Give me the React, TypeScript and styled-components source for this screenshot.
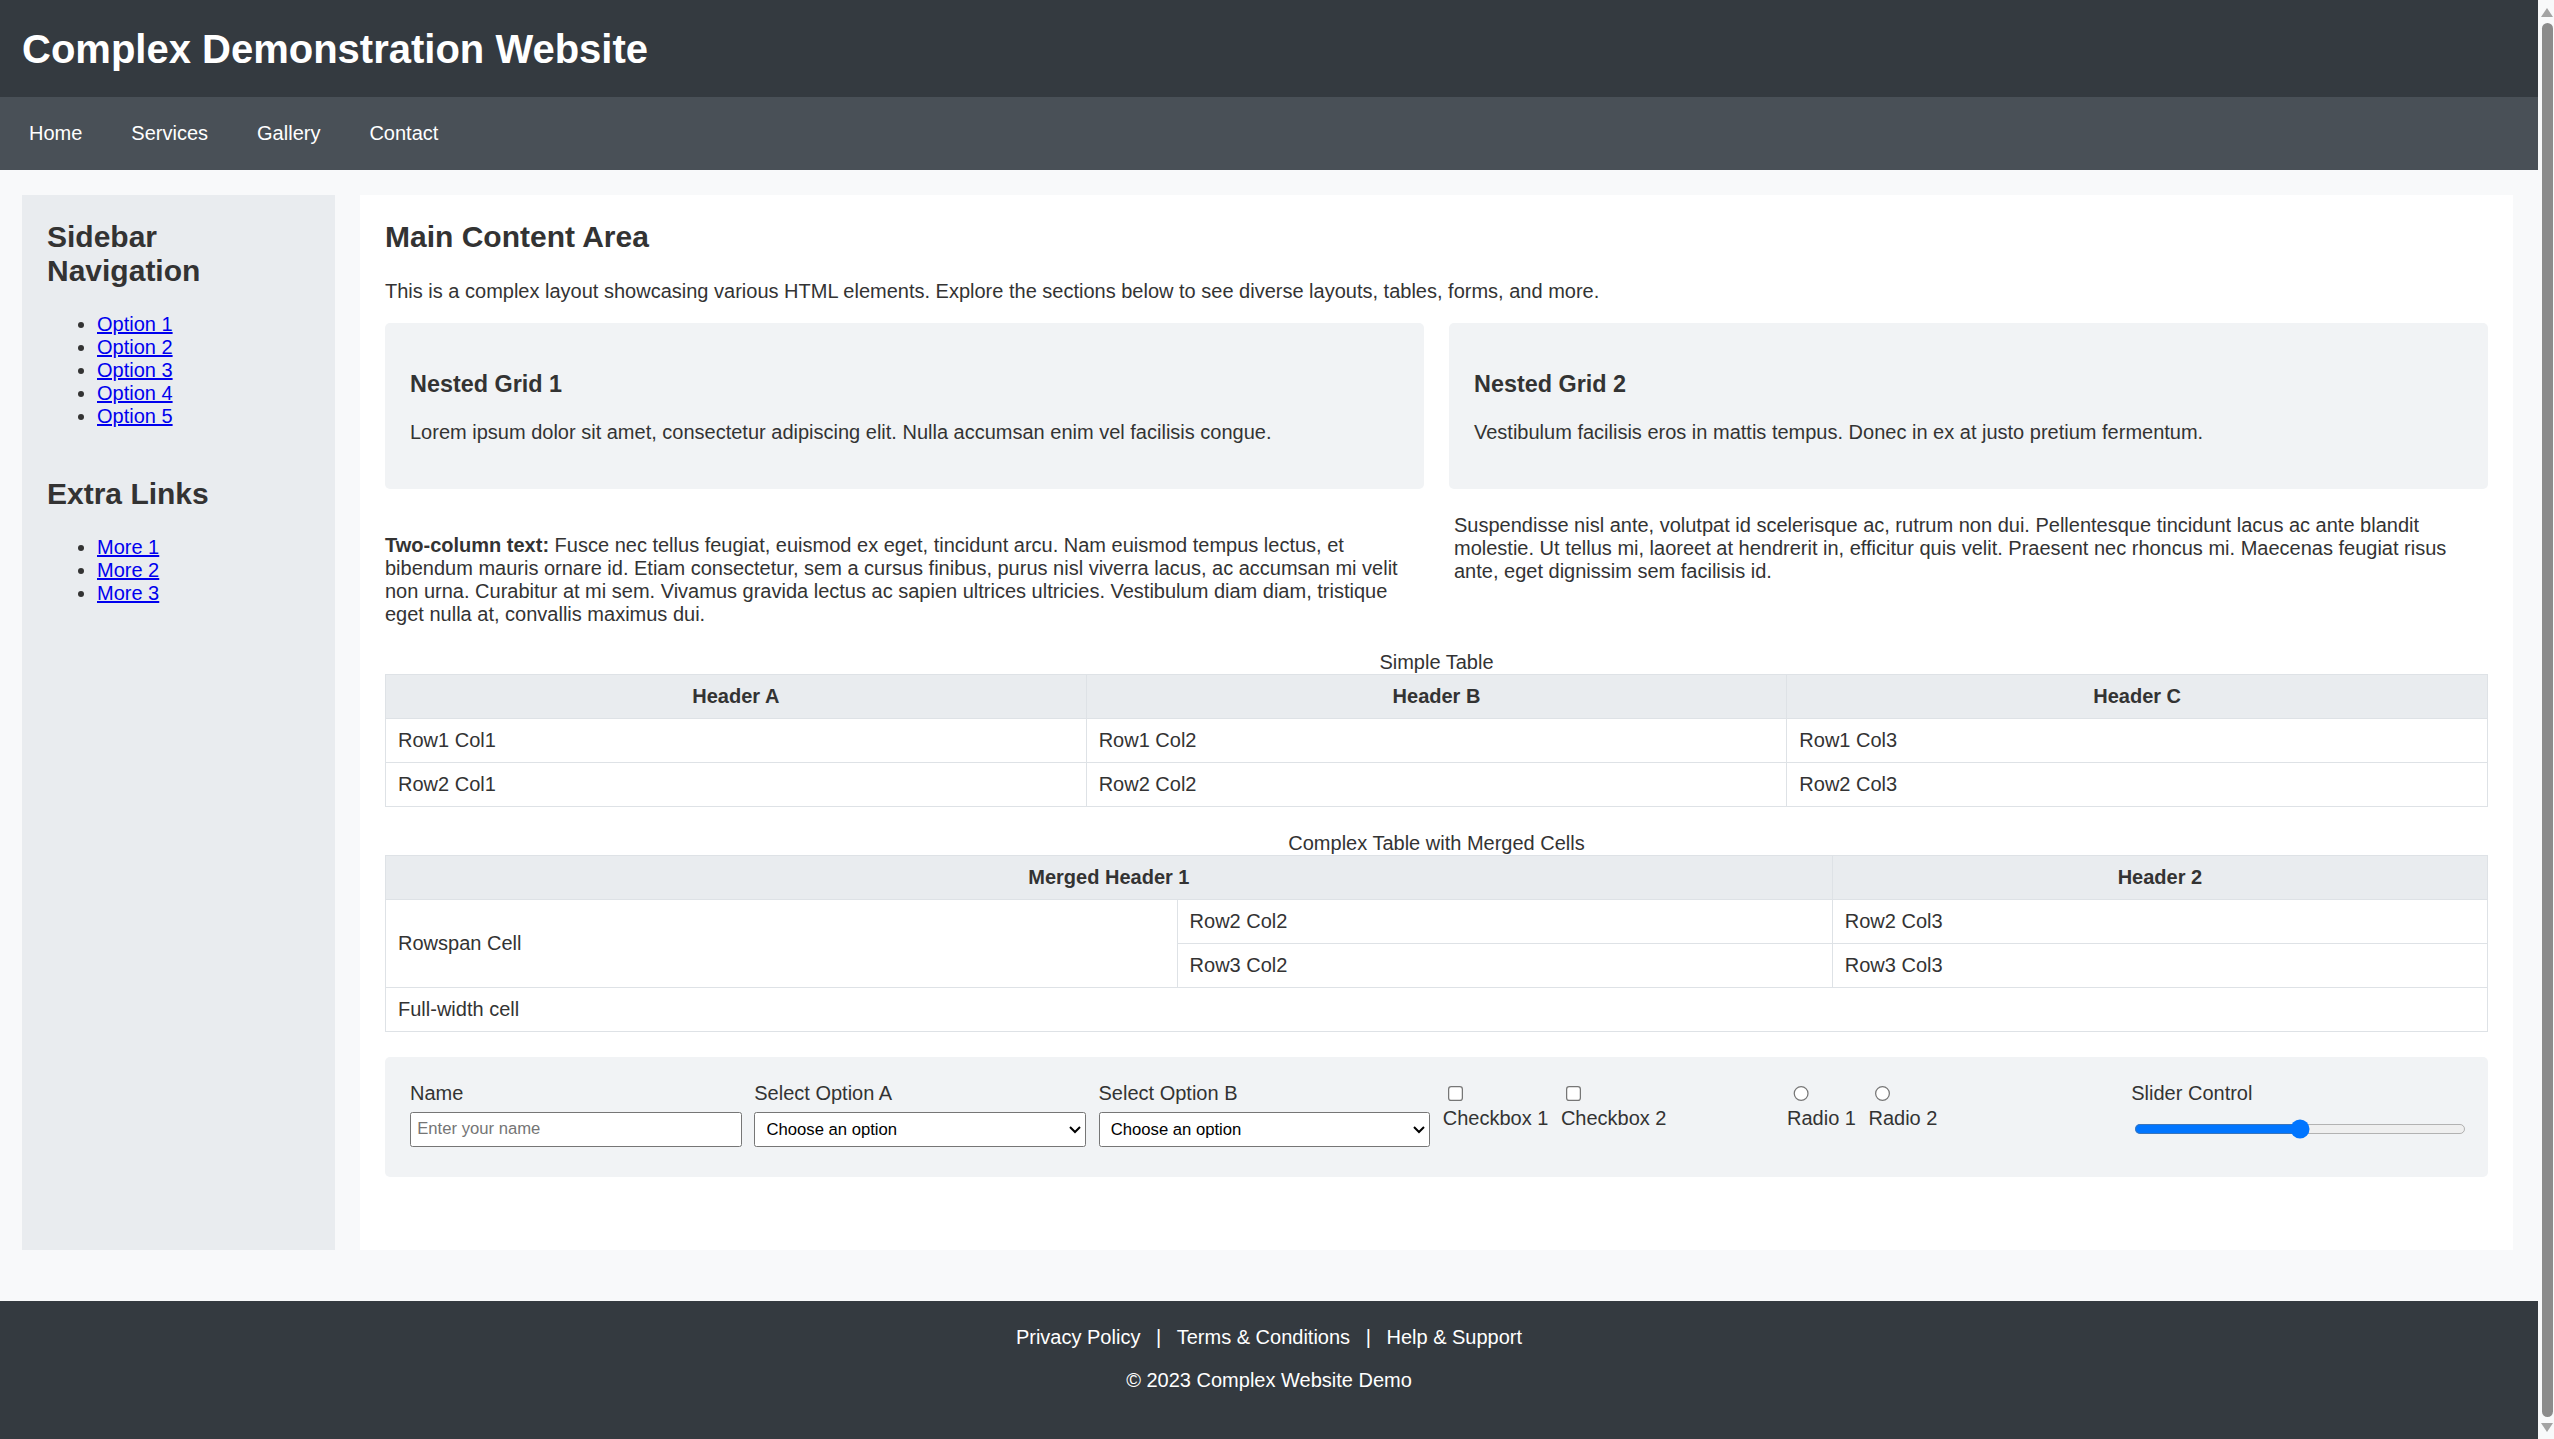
import React from "react";
import styled, { createGlobalStyle } from "styled-components";

const GlobalStyle = createGlobalStyle`
  html, body { margin: 0; padding: 0; }
  body {
    font-family: "Liberation Sans", Arial, Helvetica, sans-serif;
    font-size: 20px;
    line-height: 23px;
    color: #333;
    background: #f8f9fa;
  }
  *, *::before, *::after { box-sizing: border-box; }
`;

const Page = styled.div`
  margin-right: 16px;
`;

const ScrollRail = styled.div`
  position: fixed;
  top: 0;
  right: 0;
  bottom: 0;
  width: 16px;
  display: flex;
  flex-direction: column;
  align-items: center;
  gap: 6px;
  padding: 8px 0 7px 2px;
  background: #f8f9fa;
`;

const ScrollArrow = styled.div<{ $down?: boolean }>`
  width: 0;
  height: 0;
  border-left: 6px solid transparent;
  border-right: 6px solid transparent;
  ${(p) => (p.$down ? "border-top: 9px solid #a3a3a3;" : "border-bottom: 9px solid #a3a3a3;")}
`;

const ScrollThumb = styled.div`
  flex: 1;
  width: 11px;
  border-radius: 6px;
  background: #8b8b8b;
`;

const Header = styled.header`
  background: #343a40;
  color: #fff;
  padding: 26px 22px 25px;
`;

const SiteTitle = styled.h1`
  margin: 0;
  font-size: 40px;
  line-height: 46px;
  font-weight: bold;
`;

const NavBar = styled.nav`
  display: flex;
  gap: 25px;
  background: #495057;
  padding: 25px 17px;
`;

const NavLink = styled.a`
  color: #fff;
  text-decoration: none;
  padding: 0 12px;
  line-height: 23px;
`;

const Layout = styled.div`
  display: flex;
  gap: 25px;
  padding: 25px 25px 51px 22px;
  background: #f8f9fa;
`;

const Sidebar = styled.aside`
  flex: 0 0 313px;
  background: #e9ecef;
  padding: 25px;
`;

const SideHeading = styled.h2<{ $first?: boolean }>`
  margin: ${(p) => (p.$first ? "0" : "49px")} 0 25px;
  font-size: 30px;
  line-height: 34px;
  font-weight: bold;
  color: #333;
`;

const SideList = styled.ul`
  margin: 0;
  padding-left: 50px;
  list-style: disc;
`;

const SideItem = styled.li`
  line-height: 23px;
`;

const SideLink = styled.a`
  color: #0000ee;
  text-decoration: underline;
`;

const Main = styled.main`
  flex: 1 1 auto;
  min-width: 0;
  background: #fff;
  padding: 25px;
`;

const MainTitle = styled.h2`
  margin: 0 0 25px;
  font-size: 30px;
  line-height: 34.5px;
  font-weight: bold;
  color: #333;
`;

const Intro = styled.p`
  margin: 0 0 20px;
  line-height: 23px;
`;

const NestedGrid = styled.div`
  display: grid;
  grid-template-columns: 1fr 1fr;
  gap: 25px;
  margin-bottom: 25px;
`;

const GridCard = styled.div`
  background: #f1f3f5;
  border-radius: 5px;
  padding: 25px;
`;

const CardTitle = styled.h3`
  margin: 23.4px 0;
  font-size: 23.4px;
  line-height: 27px;
  font-weight: bold;
  color: #333;
`;

const CardText = styled.p`
  margin: 20px 0;
  line-height: 23px;
`;

const TwoColumn = styled.div`
  display: grid;
  grid-template-columns: 1fr 1fr;
  column-gap: 35px;
  align-items: start;
`;

const ColumnText = styled.p<{ $lead?: boolean }>`
  margin: ${(p) => (p.$lead ? "20px 0 0" : "0")};
  line-height: 23px;
`;

const DataTable = styled.table`
  width: 100%;
  border-collapse: collapse;
  margin-top: 25px;
  font: inherit;
  color: inherit;
`;

const Caption = styled.caption`
  line-height: 23px;
  text-align: center;
`;

const HeadCell = styled.th`
  background: #e9ecef;
  border: 1px solid #dee2e6;
  padding: 10px 12px;
  font-weight: bold;
  text-align: center;
  line-height: 23px;
`;

const Cell = styled.td`
  border: 1px solid #dee2e6;
  padding: 10px 12px;
  text-align: left;
  line-height: 23px;
`;

const FormPanel = styled.form`
  display: grid;
  grid-template-columns: repeat(6, minmax(0, 1fr));
  column-gap: 12.5px;
  align-items: start;
  margin: 25px 0 48px;
  padding: 25px 25px 29.5px;
  background: #f1f3f5;
  border-radius: 5px;
`;

const Field = styled.div`
  min-width: 0;
`;

const FieldLabel = styled.label`
  display: block;
  margin-bottom: 6.25px;
  line-height: 23px;
  color: #333;
`;

const TextInput = styled.input`
  zoom: 1.25;
  display: block;
  width: 100%;
  height: 28.5px;
  margin: 0;
  padding: 0 5px;
  border: 1px solid #767676;
  border-radius: 2px;
  background: #fff;
  font-family: Arial, "Liberation Sans", sans-serif;
  font-size: 13.333px;
  color: #000;
`;

const SelectBox = styled.select`
  zoom: 1.25;
  display: block;
  width: 100%;
  height: 28.5px;
  margin: 0;
  padding: 0 1px 0 5px;
  border: 1px solid #767676;
  border-radius: 2px;
  background: #fff;
  font-family: Arial, "Liberation Sans", sans-serif;
  font-size: 13.333px;
  color: #000;
`;

const ChoiceGroup = styled.div`
  display: flex;
  gap: 12.5px;
  min-width: 0;
`;

const ChoiceLabel = styled.label`
  display: flex;
  flex-direction: column;
  align-items: flex-start;
  line-height: 23px;
  color: #333;
`;

const ChoiceInput = styled.input<{ $radio?: boolean }>`
  zoom: 1.25;
  display: block;
  margin: ${(p) => (p.$radio ? "3px 3px 4px 5px" : "3px 3px 4px 4px")};
`;

const RangeInput = styled.input`
  zoom: 1.25;
  display: block;
  width: 100%;
  margin: 11px 2px 0;
`;

const Footer = styled.footer`
  background: #343a40;
  color: #fff;
  text-align: center;
  padding: 25px 25px 36px;
`;

const FooterLine = styled.p`
  margin: 0 0 20px;
  line-height: 23px;
`;

const FooterLink = styled.a`
  color: #fff;
  text-decoration: none;
  margin: 0 10px;
`;

export default function App() {
  return (
    <>
      <GlobalStyle />
      <Page>
        <Header>
          <SiteTitle>Complex Demonstration Website</SiteTitle>
        </Header>
        <NavBar>
          <NavLink href="#">Home</NavLink>
          <NavLink href="#">Services</NavLink>
          <NavLink href="#">Gallery</NavLink>
          <NavLink href="#">Contact</NavLink>
        </NavBar>
        <Layout>
          <Sidebar>
            <SideHeading $first>Sidebar Navigation</SideHeading>
            <SideList>
              {["Option 1", "Option 2", "Option 3", "Option 4", "Option 5"].map((o) => (
                <SideItem key={o}>
                  <SideLink href="#">{o}</SideLink>
                </SideItem>
              ))}
            </SideList>
            <SideHeading>Extra Links</SideHeading>
            <SideList>
              {["More 1", "More 2", "More 3"].map((o) => (
                <SideItem key={o}>
                  <SideLink href="#">{o}</SideLink>
                </SideItem>
              ))}
            </SideList>
          </Sidebar>
          <Main>
            <MainTitle>Main Content Area</MainTitle>
            <Intro>
              This is a complex layout showcasing various HTML elements. Explore the sections below to see diverse
              layouts, tables, forms, and more.
            </Intro>
            <NestedGrid>
              <GridCard>
                <CardTitle>Nested Grid 1</CardTitle>
                <CardText>
                  Lorem ipsum dolor sit amet, consectetur adipiscing elit. Nulla accumsan enim vel facilisis congue.
                </CardText>
              </GridCard>
              <GridCard>
                <CardTitle>Nested Grid 2</CardTitle>
                <CardText>Vestibulum facilisis eros in mattis tempus. Donec in ex at justo pretium fermentum.</CardText>
              </GridCard>
            </NestedGrid>
            <TwoColumn>
              <ColumnText $lead>
                <strong>Two-column text:</strong> Fusce nec tellus feugiat, euismod ex eget, tincidunt arcu. Nam
                euismod tempus lectus, et bibendum mauris ornare id. Etiam consectetur, sem a cursus finibus, purus nisl
                viverra lacus, ac accumsan mi velit non urna. Curabitur at mi sem. Vivamus gravida lectus ac sapien
                ultrices ultricies. Vestibulum diam diam, tristique eget nulla at, convallis maximus dui.
              </ColumnText>
              <ColumnText>
                Suspendisse nisl ante, volutpat id scelerisque ac, rutrum non dui. Pellentesque tincidunt lacus ac ante
                blandit molestie. Ut tellus mi, laoreet at hendrerit in, efficitur quis velit. Praesent nec rhoncus mi.
                Maecenas feugiat risus ante, eget dignissim sem facilisis id.
              </ColumnText>
            </TwoColumn>
            <DataTable>
              <Caption>Simple Table</Caption>
              <thead>
                <tr>
                  <HeadCell>Header A</HeadCell>
                  <HeadCell>Header B</HeadCell>
                  <HeadCell>Header C</HeadCell>
                </tr>
              </thead>
              <tbody>
                <tr>
                  <Cell>Row1 Col1</Cell>
                  <Cell>Row1 Col2</Cell>
                  <Cell>Row1 Col3</Cell>
                </tr>
                <tr>
                  <Cell>Row2 Col1</Cell>
                  <Cell>Row2 Col2</Cell>
                  <Cell>Row2 Col3</Cell>
                </tr>
              </tbody>
            </DataTable>
            <DataTable>
              <Caption>Complex Table with Merged Cells</Caption>
              <thead>
                <tr>
                  <HeadCell colSpan={2}>Merged Header 1</HeadCell>
                  <HeadCell>Header 2</HeadCell>
                </tr>
              </thead>
              <tbody>
                <tr>
                  <Cell rowSpan={2}>Rowspan Cell</Cell>
                  <Cell>Row2 Col2</Cell>
                  <Cell>Row2 Col3</Cell>
                </tr>
                <tr>
                  <Cell>Row3 Col2</Cell>
                  <Cell>Row3 Col3</Cell>
                </tr>
                <tr>
                  <Cell colSpan={3}>Full-width cell</Cell>
                </tr>
              </tbody>
            </DataTable>
            <FormPanel onSubmit={(e) => e.preventDefault()}>
              <Field>
                <FieldLabel htmlFor="name">Name</FieldLabel>
                <TextInput id="name" type="text" placeholder="Enter your name" />
              </Field>
              <Field>
                <FieldLabel htmlFor="selA">Select Option A</FieldLabel>
                <SelectBox id="selA" defaultValue="">
                  <option value="">Choose an option</option>
                  <option value="1">Option 1</option>
                  <option value="2">Option 2</option>
                </SelectBox>
              </Field>
              <Field>
                <FieldLabel htmlFor="selB">Select Option B</FieldLabel>
                <SelectBox id="selB" defaultValue="">
                  <option value="">Choose an option</option>
                  <option value="1">Option 1</option>
                  <option value="2">Option 2</option>
                </SelectBox>
              </Field>
              <ChoiceGroup>
                <ChoiceLabel>
                  <ChoiceInput type="checkbox" />
                  Checkbox 1
                </ChoiceLabel>
                <ChoiceLabel>
                  <ChoiceInput type="checkbox" />
                  Checkbox 2
                </ChoiceLabel>
              </ChoiceGroup>
              <ChoiceGroup>
                <ChoiceLabel>
                  <ChoiceInput $radio type="radio" name="radioGroup" />
                  Radio 1
                </ChoiceLabel>
                <ChoiceLabel>
                  <ChoiceInput $radio type="radio" name="radioGroup" />
                  Radio 2
                </ChoiceLabel>
              </ChoiceGroup>
              <Field>
                <FieldLabel htmlFor="slider">Slider Control</FieldLabel>
                <RangeInput id="slider" type="range" min={0} max={100} defaultValue={50} />
              </Field>
            </FormPanel>
          </Main>
        </Layout>
        <Footer>
          <FooterLine>
            <FooterLink href="#">Privacy Policy</FooterLink> | <FooterLink href="#">Terms &amp; Conditions</FooterLink>{" "}
            | <FooterLink href="#">Help &amp; Support</FooterLink>
          </FooterLine>
          <FooterLine>© 2023 Complex Website Demo</FooterLine>
        </Footer>
      </Page>
      <ScrollRail aria-hidden="true">
        <ScrollArrow />
        <ScrollThumb />
        <ScrollArrow $down />
      </ScrollRail>
    </>
  );
}
